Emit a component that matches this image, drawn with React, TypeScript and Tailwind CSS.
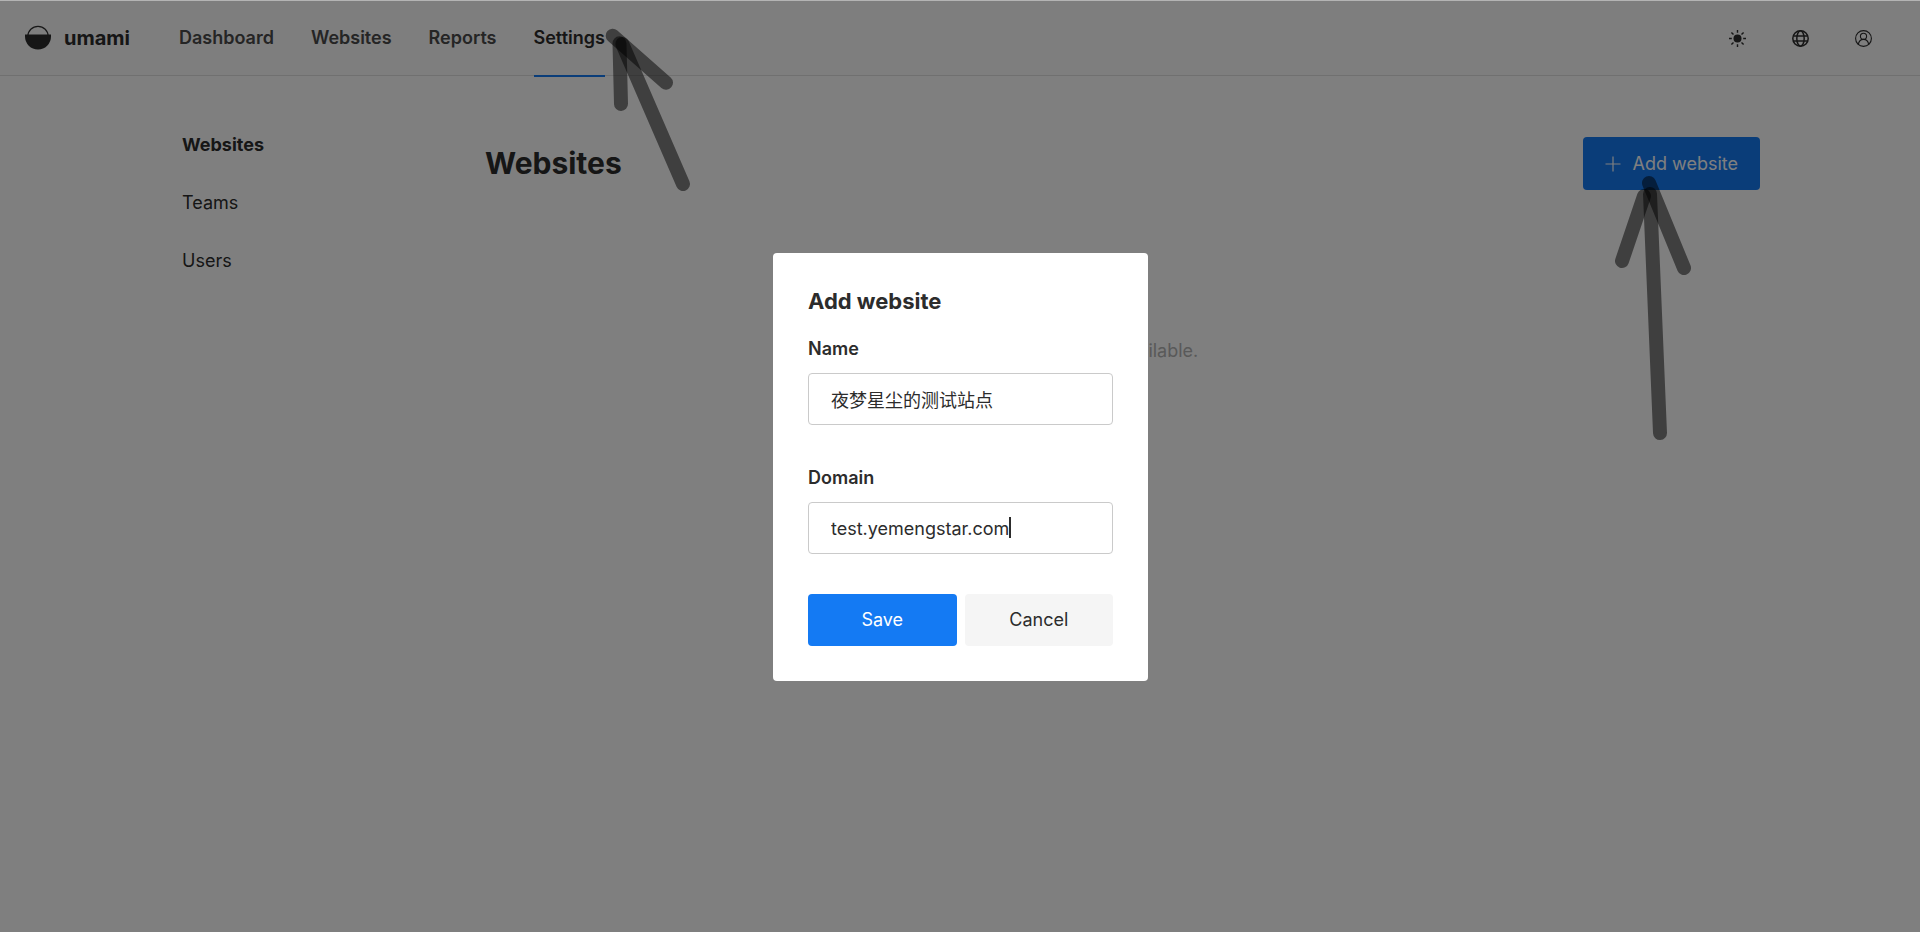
import React from "react";

function Logo() {
  return (
    <svg viewBox="0 0 26 26" className="h-[26px] w-[26px]" aria-hidden="true">
      <circle cx="13" cy="11.5" r="10.2" fill="none" stroke="#303030" strokeWidth="1.2" />
      <path d="M0 9.5h26v2a13 13 0 0 1-26 0z" fill="#2c2c2c" />
    </svg>
  );
}

function SunIcon() {
  return (
    <svg viewBox="0 0 17 17" className="h-[17px] w-[17px]" aria-hidden="true">
      <circle cx="8.5" cy="8.5" r="4" fill="#2c2c2c" />
      <path
        d="M8.5 0v2.800M8.5 14.200v2.800M0 8.500h2.800M14.200 8.500h2.800M2.400 2.400l2.100 2.100M12.500 12.500l2.100 2.100M2.400 14.600l2.100-2.100M12.500 4.500l2.100-2.100"
        stroke="#2c2c2c"
        strokeWidth="1.4"
      />
    </svg>
  );
}

function GlobeIcon() {
  return (
    <svg viewBox="0 0 17 17" className="h-[17px] w-[17px]" fill="none" stroke="#2c2c2c" strokeWidth="1.5" aria-hidden="true">
      <circle cx="8.5" cy="8.5" r="7.700" />
      <ellipse cx="8.5" cy="8.5" rx="3.700" ry="7.700" />
      <path d="M1.3 6h14.4M1.3 11h14.4" />
    </svg>
  );
}

function UserIcon() {
  return (
    <svg viewBox="0 0 17 17" className="h-[17px] w-[17px]" fill="none" stroke="#2c2c2c" strokeWidth="1.1" aria-hidden="true">
      <circle cx="8.5" cy="8.5" r="7.9" />
      <circle cx="8.5" cy="6.3" r="3.1" />
      <path d="M3.300 14.600c.4-3 2.500-5.200 5.200-5.200s4.800 2.200 5.200 5.200" />
    </svg>
  );
}

function SettingsArrow() {
  return (
    <svg
      viewBox="0 0 100 170"
      className="pointer-events-none absolute top-6 left-full h-[170px] w-[100px]"
      stroke="#000"
      strokeOpacity="0.5"
      strokeWidth="14"
      strokeLinecap="round"
      aria-hidden="true"
    >
      <path d="M7.700 10.700L61 57.700" />
      <path d="M14.500 18.300L16 79" />
      <path d="M17.300 19L78 159" />
    </svg>
  );
}

function AddArrow() {
  return (
    <svg
      viewBox="0 0 90 270"
      className="pointer-events-none absolute top-9 left-8 h-[270px] w-[90px]"
      stroke="#000"
      strokeOpacity="0.5"
      strokeWidth="14"
      strokeLinecap="round"
      aria-hidden="true"
    >
      <path d="M34 10L69 95" />
      <path d="M29 23L7 88" />
      <path d="M35 21L45 260" />
    </svg>
  );
}

const iconButtons = [
  { label: "Theme", icon: <SunIcon /> },
  { label: "Language", icon: <GlobeIcon /> },
  { label: "Profile", icon: <UserIcon /> },
];

function Header() {
  return (
    <header className="flex h-[76px] items-stretch border-t border-b border-t-[#b4b4b4] border-b-[#e1e1e1] bg-[#fcfcfc] pr-12 pl-[25px]">
      <a href="#" className="mr-[49px] flex items-center gap-[13px] text-xl font-bold text-[#2c2c2c]">
        <Logo />
        umami
      </a>
      <nav className="flex flex-1 gap-[37px] font-semibold text-[#4b4b4b]">
        <a href="#dashboard" className="flex items-center">Dashboard</a>
        <a href="#websites" className="flex items-center">Websites</a>
        <a href="#reports" className="flex items-center">Reports</a>
        <div className="relative flex">
          <a href="#settings" className="-mb-[2px] flex items-center border-b-2 border-[#147af3] text-[#2c2c2c]">
            Settings
          </a>
          <SettingsArrow />
        </div>
      </nav>
      <div className="flex items-center gap-[46px]">
        {iconButtons.map((b) => (
          <button key={b.label} type="button" aria-label={b.label}>
            {b.icon}
          </button>
        ))}
      </div>
    </header>
  );
}

function Dialog() {
  const field =
    "block h-[52px] w-full rounded border border-[#cacaca] bg-white px-[22px] text-[#2c2c2c] outline-none";
  return (
    <div className="fixed inset-x-0 top-px bottom-0 flex items-center justify-center bg-black/50 pt-px pl-px">
      <form
        role="dialog"
        aria-labelledby="dialog-title"
        onSubmit={(e) => e.preventDefault()}
        className="w-[375px] rounded bg-white p-[35px] text-[#2c2c2c]"
      >
        <h2 id="dialog-title" className="text-[22px] leading-[26px] font-bold">Add website</h2>
        <label htmlFor="name" className="mt-[23px] mb-3 block leading-6 font-semibold">Name</label>
        <input id="name" type="text" defaultValue="夜梦星尘的测试站点" className={field} />
        <label htmlFor="domain" className="mt-[41px] mb-3 block leading-6 font-semibold">Domain</label>
        <div className="relative">
          <input id="domain" type="text" defaultValue="test.yemengstar.com" className={field} />
          <span className="absolute top-[15px] left-[201px] h-[21px] w-[2px] bg-[#2c2c2c]" />
        </div>
        <div className="mt-10 grid grid-cols-2 gap-2">
          <button type="submit" className="h-[52px] rounded bg-[#147af3] text-white">Save</button>
          <button type="button" className="h-[52px] rounded bg-[#f5f5f5]">Cancel</button>
        </div>
      </form>
    </div>
  );
}

export default function App() {
  return (
    <div className="min-h-screen bg-white font-['Inter','Noto_Sans_CJK_SC',sans-serif] text-[18px] leading-6 text-[#2c2c2c]">
      <Header />
      <div className="mx-auto flex max-w-[1600px]">
        <nav className="flex w-[325px] shrink-0 flex-col items-start gap-[34px] pt-[57px] pl-[22px]">
          <a href="#websites" className="font-bold">Websites</a>
          <a href="#teams">Teams</a>
          <a href="#users">Users</a>
        </nav>
        <main className="flex-1 pt-[61px]">
          <div className="flex items-center justify-between">
            <h1 className="pb-[2px] text-[30px] leading-9 font-bold">Websites</h1>
            <div className="relative">
              <button type="button" className="flex h-[53px] items-center gap-[11px] rounded bg-[#147af3] px-[22px] text-white">
                <svg viewBox="0 0 16 16" className="h-4 w-4" stroke="#fff" strokeWidth="1.2" aria-hidden="true">
                  <path d="M8 .5v15M.5 8h15" />
                </svg>
                Add website
              </button>
              <AddArrow />
            </div>
          </div>
          <p className="mt-[149px] text-center text-[#b3b3b3]">No data available.</p>
        </main>
      </div>
      <Dialog />
    </div>
  );
}
